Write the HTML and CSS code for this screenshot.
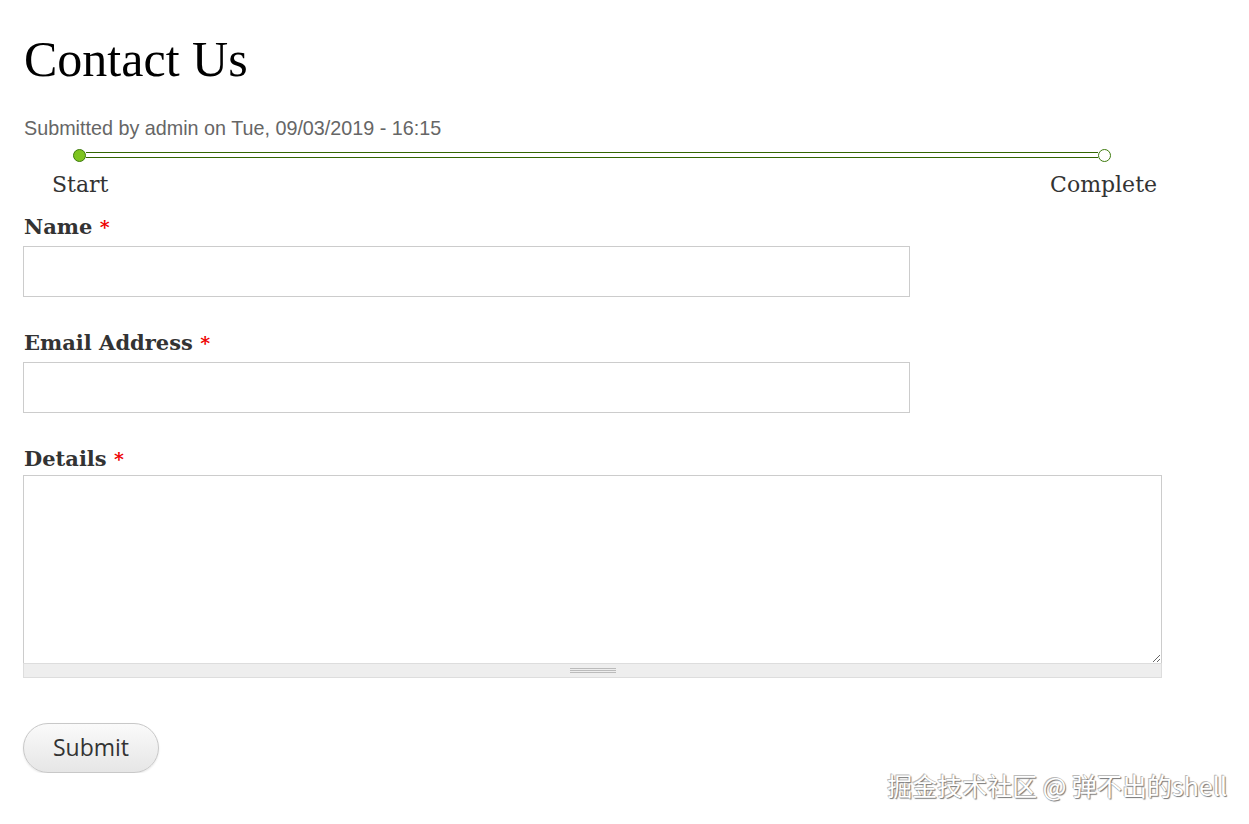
FILE: index.html
```html
<!DOCTYPE html>
<html lang="en">
<head>
<meta charset="utf-8">
<title>Contact Us</title>
<link rel="stylesheet" href="styles.css">
</head>
<body>
<main class="page">
  <h1 class="title">Contact Us</h1>
  <div class="meta">Submitted by admin on Tue, 09/03/2019 - 16:15</div>
  <div class="progress">
    <div class="track">
      <span class="dot dot-done"></span>
      <span class="line"></span>
      <span class="dot dot-todo"></span>
    </div>
    <div class="steps">
      <span class="step">Start</span>
      <span class="step">Complete</span>
    </div>
  </div>
  <form class="form">
    <div class="field">
      <label class="label">Name <span class="req">*</span></label>
      <input class="input" type="text">
    </div>
    <div class="field">
      <label class="label">Email Address <span class="req">*</span></label>
      <input class="input" type="text">
    </div>
    <div class="field">
      <label class="label">Details <span class="req">*</span></label>
      <div class="area-wrap">
        <textarea class="area"></textarea>
        <div class="grip"><span class="grip-lines"></span></div>
      </div>
    </div>
    <div class="actions">
      <button class="btn" type="button">Submit</button>
    </div>
  </form>
</main>
<div class="watermark">掘金技术社区 @ 弹不出的shell</div>
</body>
</html>
```
FILE: styles.css
```css
html, body {
  margin: 0;
  padding: 0;
  background: #fff;
}
body {
  font-family: "DejaVu Serif", Georgia, serif;
  color: #333;
}
.page {
  padding: 0 0 0 24px;
  width: 1138px;
}
.title {
  margin: 0;
  padding-top: 31px;
  font-family: "Liberation Serif", Georgia, serif;
  font-size: 50px;
  font-weight: normal;
  line-height: 56px;
  color: #000;
}
.meta {
  margin-top: 29px;
  font-family: "Liberation Sans", Arial, sans-serif;
  font-size: 19.75px;
  line-height: 24px;
  color: #666;
}
.progress {
  margin-top: 8px;
}
.track {
  display: flex;
  align-items: center;
  margin: 0 51px 0 49px;
  height: 14px;
}
.dot {
  width: 13px;
  height: 13px;
  border-radius: 50%;
  box-sizing: border-box;
  border: 1px solid #3d7a0c;
  flex: none;
}
.dot-done {
  background: #7dc41e;
}
.dot-todo {
  background: #fff;
}
.line {
  flex: 1;
  height: 6px;
  box-sizing: border-box;
  border-top: 1px solid #336600;
  border-bottom: 1px solid #336600;
  background: #fff;
}
.steps {
  display: flex;
  justify-content: space-between;
  font-size: 22px;
  line-height: 30px;
  margin-top: 8px;
  padding: 0 5px 0 28px;
  color: #333;
}
.form {
  margin-top: 12px;
}
.field {
  margin-bottom: 31px;
}
.label {
  display: block;
  font-weight: bold;
  font-size: 21px;
  line-height: 30px;
  margin-bottom: 4px;
  color: #333;
}
.req {
  color: #e00;
  font-size: 19px;
}
.input {
  display: block;
  box-sizing: border-box;
  width: 887px;
  height: 51px;
  margin: 0 0 0 -1px;
  border: 1px solid #ccc;
  padding: 4px 8px;
  font-size: 18px;
  background: #fff;
}
.area-wrap {
  width: 1139px;
  margin-left: -1px;
  margin-top: -3px;
}
.area {
  display: block;
  box-sizing: border-box;
  width: 100%;
  height: 188px;
  margin: 0;
  border: 1px solid #ccc;
  border-bottom: none;
  resize: vertical;
  font-size: 16px;
}
.grip {
  height: 15px;
  box-sizing: border-box;
  border: 1px solid #ddd;
  background: #eee;
  display: flex;
  justify-content: center;
  align-items: center;
}
.grip-lines {
  width: 46px;
  height: 5px;
  border-top: 1px solid #bbb;
  border-bottom: 1px solid #bbb;
  box-sizing: border-box;
  position: relative;
}
.grip-lines::after {
  content: "";
  position: absolute;
  left: 0;
  right: 0;
  top: 1px;
  height: 1px;
  background: #bbb;
}
.actions {
  margin-top: 45px;
}
.btn {
  margin-left: -1px;
  width: 136px;
  height: 50px;
  border-radius: 25px;
  border: 1px solid #c8c8c8;
  background: linear-gradient(#fafafa, #e6e6e6);
  font-family: "Open Sans", "DejaVu Sans", sans-serif;
  font-size: 23px;
  color: #333;
  box-shadow: 0 1px 2px rgba(0,0,0,0.1);
  padding: 0 0 3px 0;
}
.watermark {
  position: absolute;
  right: 22px;
  top: 767px;
  font-family: "Noto Sans CJK SC", "Noto Sans", sans-serif;
  font-size: 25px;
  color: #fff;
  text-shadow: 1px 1px 1px #777, -1px -1px 0 #bbb, 0 0 1px #999;
}
```
